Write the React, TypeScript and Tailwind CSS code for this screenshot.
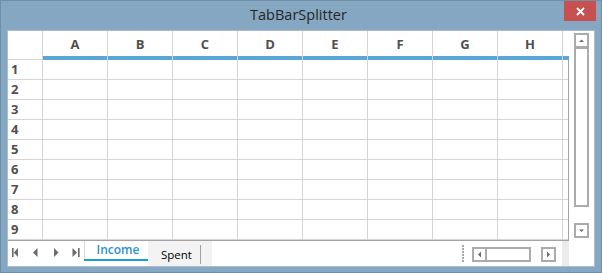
import React from "react";

const COLS = ["A", "B", "C", "D", "E", "F", "G", "H"];
const ROWS = [1, 2, 3, 4, 5, 6, 7, 8, 9];

function Arrow({ dir }: { dir: "up" | "down" | "left" | "right" }) {
  const pts: Record<string, string> = {
    up: "3,7 8,7 5.5,4.5",
    down: "3,4.5 8,4.5 5.5,7",
    left: "7,2.5 7,8.5 4,5.5",
    right: "4,2.5 4,8.5 7,5.5",
  };
  return (
    <svg width="11" height="11" viewBox="0 0 11 11" aria-hidden="true">
      <polygon points={pts[dir]} fill="#6b6b6b" />
    </svg>
  );
}

function ScrollBtn({ dir, className = "" }: { dir: "up" | "down" | "left" | "right"; className?: string }) {
  return (
    <div className={`w-[15px] h-[15px] border-2 border-[#ababab] flex items-center justify-center ${className}`}>
      <Arrow dir={dir} />
    </div>
  );
}

export default function App() {
  return (
    <div className="w-[602px] h-[273px] bg-[#85a7c1] border border-[#6f8ea8] flex flex-col font-['Open_Sans',sans-serif]">
      {/* Title bar */}
      <div className="relative h-[29px] flex items-center justify-center">
        <span className="text-[14.5px] leading-none text-[#262626] pr-[5px] pb-[1px]">TabBarSplitter</span>
        <button
          type="button"
          aria-label="Close"
          className="absolute right-[5px] top-0 w-[32px] h-[20px] bg-[#c75050] flex items-center justify-center"
        >
          <svg width="9" height="9" viewBox="0 0 9 9" aria-hidden="true">
            <line x1="1" y1="1" x2="8" y2="8" stroke="white" strokeWidth="1.8" />
            <line x1="8" y1="1" x2="1" y2="8" stroke="white" strokeWidth="1.8" />
          </svg>
        </button>
      </div>

      {/* Client area */}
      <div className="mx-[6px] h-[237px] border border-[#a9bdcd] bg-white flex">
        <div className="w-[561px] flex flex-col">
          {/* Header row */}
          <div className="flex h-[29px]">
            <div className="w-[35px] border-r border-b border-[#d5d5d5]" />
            {COLS.map((c) => (
              <div key={c} className="w-[65px] border-r border-[#d5d5d5] flex flex-col">
                <div className="flex-1 flex items-center justify-center pt-[3px] text-[13px] font-bold text-[#4f4f4f]">
                  {c}
                </div>
                <div className="h-[4px] bg-[#5aa6db]" />
              </div>
            ))}
            <div className="flex-1 flex flex-col">
              <div className="flex-1" />
              <div className="h-[4px] bg-[#5aa6db]" />
            </div>
          </div>

          {/* Rows */}
          <div className="border-r border-b border-[#a3a3a3]">
            {ROWS.map((r) => (
              <div key={r} className="flex h-[20px]">
                <div className="w-[35px] border-r border-b border-[#d5d5d5] flex items-center pl-[3px] text-[13px] font-bold text-[#4f4f4f]">
                  {r}
                </div>
                {COLS.map((c) => (
                  <div key={c} className="w-[65px] border-r border-b border-[#d5d5d5]" />
                ))}
                <div className="flex-1 border-b border-[#d5d5d5]" />
              </div>
            ))}
          </div>

          {/* Tab bar */}
          <div className="h-[25px] flex">
            <div className="w-[76px]">
              <svg width="76" height="25" viewBox="0 0 76 25" aria-hidden="true">
                <rect x="4" y="7" width="1.6" height="9" fill="#6b6b6b" />
                <polygon points="10,7 10,16 5.8,11.5" fill="#6b6b6b" />
                <polygon points="29.5,7 29.5,16 25,11.5" fill="#6b6b6b" />
                <polygon points="46,7 46,16 50.5,11.5" fill="#6b6b6b" />
                <polygon points="64.5,7 64.5,16 69,11.5" fill="#6b6b6b" />
                <rect x="70" y="7" width="1.6" height="9" fill="#6b6b6b" />
              </svg>
            </div>
            <div className="w-[64px] flex flex-col">
              <div className="h-[18px] border-l border-[#d8d8d8] flex items-center justify-center pl-[3px] text-[12px] font-semibold text-[#2b90d4]">
                Income
              </div>
              <div className="h-[2px] bg-[#1e9bd7]" />
            </div>
            <div className="w-[64px] bg-[#f3f3f3] flex items-center">
              <span className="w-[52px] pl-[13px] pt-[3px] text-[11.5px] text-black">Spent</span>
              <div className="w-px h-[19px] mt-[2px] bg-[#a0a0a0]" />
            </div>
            <div className="flex-1" />
            <div className="w-[2px] flex flex-col gap-[1px] pt-[4px]">
              {[0, 1, 2, 3, 4, 5].map((i) => (
                <div key={i} className="h-[2px] bg-[#a8a8a8]" />
              ))}
            </div>
            <div className="flex pl-[8px] pr-[6px] pt-[6px]">
              <ScrollBtn dir="left" className="w-[14px]" />
              <div className="w-[44px] h-[15px] border-2 border-l-0 border-[#ababab]" />
              <ScrollBtn dir="right" className="w-[14px] ml-[10px]" />
            </div>
            <div className="w-[7px] bg-[#ececec]" />
          </div>
        </div>

        {/* Vertical scrollbar */}
        <div className="flex-1 pl-[5px] pt-[2px]">
          <div className="w-[15px] flex flex-col">
            <ScrollBtn dir="up" />
            <div className="h-[159px] border-2 border-t border-[#ababab]" />
            <ScrollBtn dir="down" className="mt-[16px]" />
          </div>
        </div>
      </div>
    </div>
  );
}
